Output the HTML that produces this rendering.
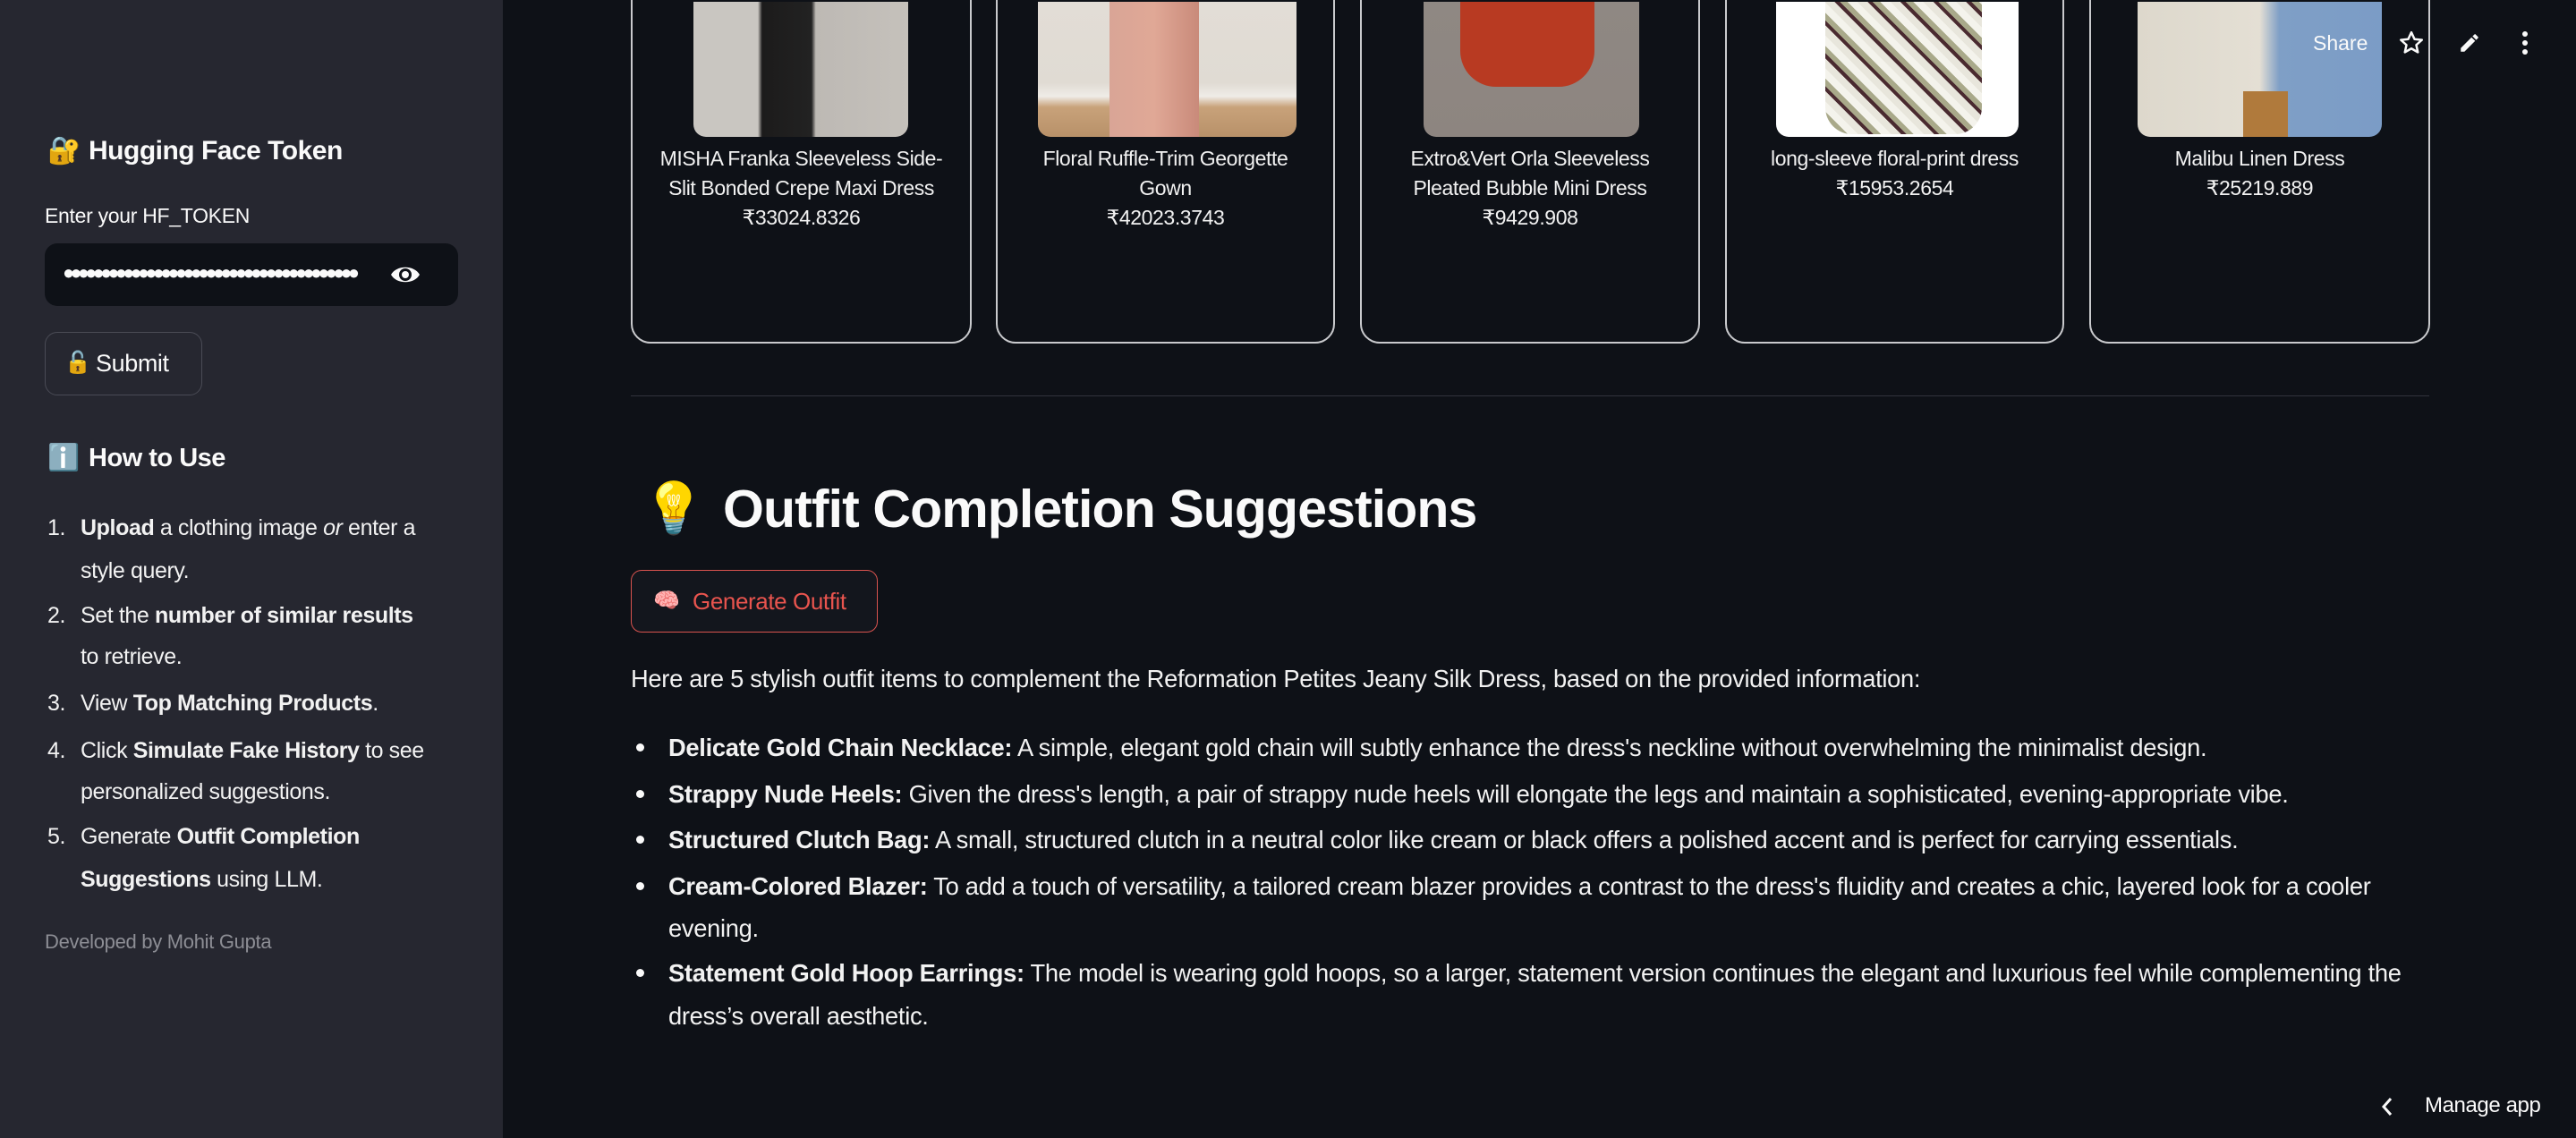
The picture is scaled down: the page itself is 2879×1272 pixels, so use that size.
<!DOCTYPE html>
<html><head><meta charset="utf-8">
<style>
*{margin:0;padding:0;box-sizing:border-box}
body{width:2879px;height:1272px;background:#0e1117;color:#fafafa;font-family:"Liberation Sans","DejaVu Sans",sans-serif;position:relative;overflow:hidden}
.sb{position:absolute;left:0;top:0;width:562px;height:1272px;background:#262730}
.a{position:absolute;white-space:nowrap}
.card{position:absolute;top:-30px;height:414px;border:2px solid #c9cacd;border-radius:22px}
.img{position:absolute;top:0;height:151px;border-radius:0 0 14px 14px}
.ct{position:absolute;left:0;right:0;text-align:center;font-size:23px;line-height:33px;color:#f2f2f2;letter-spacing:-0.4px}
.body{font-size:27.3px;letter-spacing:-0.3px;color:#f2f2f2}
.dot{position:absolute;width:9px;height:9px;border-radius:50%;background:#fafafa}
.sl{font-size:25px;letter-spacing:-0.4px;color:#f2f2f2}
</style></head><body>
<div class="sb"></div>

<!-- sidebar -->
<div class="a" style="left:53px;top:150px;font-size:30px;line-height:38px">🔐</div>
<div class="a" style="left:99px;top:150px;font-size:30px;font-weight:bold;line-height:38px;letter-spacing:-0.5px">Hugging Face Token</div>
<div class="a" style="left:50px;top:227px;font-size:23px;line-height:28px;letter-spacing:-0.3px">Enter your HF_TOKEN</div>
<div style="position:absolute;left:50px;top:272px;width:462px;height:70px;background:#0e1117;border-radius:14px"></div>
<div class="a" style="left:70px;top:290px;font-size:22px;line-height:30px;letter-spacing:-4.9px;font-weight:bold">●●●●●●●●●●●●●●●●●●●●●●●●●●●●●●●●●●●●●●●</div>
<svg style="position:absolute;left:435px;top:293px" width="36" height="28" viewBox="0 0 36 28"><path d="M2 14 C8 3 28 3 34 14 C28 25 8 25 2 14Z" fill="#fafafa"/><circle cx="18" cy="14" r="7" fill="#0e1117"/><circle cx="18" cy="14" r="4" fill="#fafafa"/></svg>
<div style="position:absolute;left:50px;top:371px;width:176px;height:71px;border:1.5px solid #4a4b55;border-radius:14px"></div>
<div class="a" style="left:72px;top:390px;font-size:24px;line-height:32px">🔓</div>
<div class="a" style="left:107px;top:388px;font-size:27px;line-height:36px;letter-spacing:-0.4px">Submit</div>
<div class="a" style="left:53px;top:493px;font-size:29px;line-height:38px">ℹ️</div>
<div class="a" style="left:99px;top:493px;font-size:29px;font-weight:bold;line-height:38px;letter-spacing:-0.5px">How to Use</div>
<div class="a sl" style="left:53px;top:575px;line-height:30px">1.</div>
<div class="a sl" style="left:90px;top:575px;line-height:30px"><b>Upload</b> a clothing image <i>or</i> enter a</div>
<div class="a sl" style="left:90px;top:623px;line-height:30px">style query.</div>
<div class="a sl" style="left:53px;top:673px;line-height:30px">2.</div>
<div class="a sl" style="left:90px;top:673px;line-height:30px">Set the <b>number of similar results</b></div>
<div class="a sl" style="left:90px;top:719px;line-height:30px">to retrieve.</div>
<div class="a sl" style="left:53px;top:771px;line-height:30px">3.</div>
<div class="a sl" style="left:90px;top:771px;line-height:30px">View <b>Top Matching Products</b>.</div>
<div class="a sl" style="left:53px;top:824px;line-height:30px">4.</div>
<div class="a sl" style="left:90px;top:824px;line-height:30px">Click <b>Simulate Fake History</b> to see</div>
<div class="a sl" style="left:90px;top:870px;line-height:30px">personalized suggestions.</div>
<div class="a sl" style="left:53px;top:920px;line-height:30px">5.</div>
<div class="a sl" style="left:90px;top:920px;line-height:30px">Generate <b>Outfit Completion</b></div>
<div class="a sl" style="left:90px;top:968px;line-height:30px"><b>Suggestions</b> using LLM.</div>
<div class="a" style="left:50px;top:1039px;font-size:22px;line-height:28px;color:#8d8e95;letter-spacing:-0.3px">Developed by Mohit Gupta</div>

<!-- cards -->
<div class="card" style="left:705px;width:381px">
 <div class="img" style="top:30px;left:68px;width:240px;background:linear-gradient(90deg,#c9c6c1 0%,#c9c6c1 30%,#1c1b1b 32%,#222 55%,#bdb9b4 57%,#c5c1bb 100%)"></div>
 <div class="ct" style="top:189px">MISHA Franka Sleeveless Side-</div>
 <div class="ct" style="top:222px">Slit Bonded Crepe Maxi Dress</div>
 <div class="ct" style="top:255px">₹33024.8326</div>
</div>
<div class="card" style="left:1113px;width:379px">
 <div class="img" style="top:30px;left:45px;width:289px;background:linear-gradient(180deg,#e2ddd6 0%,#e0dbd3 60%,#efece7 70%,#c8a27a 78%,#b89169 100%)"></div>
 <div class="img" style="top:30px;left:125px;width:100px;background:linear-gradient(90deg,#d9a596,#e0a896,#c98a7a);border-radius:0"></div>
 <div class="ct" style="top:189px">Floral Ruffle-Trim Georgette</div>
 <div class="ct" style="top:222px">Gown</div>
 <div class="ct" style="top:255px">₹42023.3743</div>
</div>
<div class="card" style="left:1520px;width:380px">
 <div class="img" style="top:30px;left:69px;width:241px;background:linear-gradient(180deg,#8f8883 0%,#8d8580 100%)"></div>
 <div class="img" style="top:30px;left:110px;width:150px;height:95px;background:#b83a22;border-radius:0 0 40px 40px"></div>
 <div class="ct" style="top:189px">Extro&amp;Vert Orla Sleeveless</div>
 <div class="ct" style="top:222px">Pleated Bubble Mini Dress</div>
 <div class="ct" style="top:255px">₹9429.908</div>
</div>
<div class="card" style="left:1928px;width:379px">
 <div class="img" style="top:30px;left:55px;width:271px;background:#fff"></div>
 <div class="img" style="top:30px;left:110px;width:175px;height:148px;background:repeating-linear-gradient(45deg,#e8e6dc 0 8px,#4a2a30 8px 12px,#a9a98a 12px 18px,#f4f3ec 18px 26px);border-radius:0 0 30px 30px"></div>
 <div class="ct" style="top:189px">long-sleeve floral-print dress</div>
 <div class="ct" style="top:222px">₹15953.2654</div>
</div>
<div class="card" style="left:2335px;width:381px">
 <div class="img" style="top:30px;left:52px;width:273px;background:linear-gradient(90deg,#ddd8cc 0%,#e4dfd4 50%,#7f9fc6 58%,#7b9cc6 100%)"></div>
 <div class="img" style="top:130px;left:170px;width:50px;height:51px;background:#b07a3c;border-radius:0"></div>
 <div class="ct" style="top:189px">Malibu Linen Dress</div>
 <div class="ct" style="top:222px">₹25219.889</div>
</div>

<!-- toolbar -->
<div class="a" style="left:2585px;top:33px;font-size:23px;line-height:30px">Share</div>
<svg style="position:absolute;left:2680px;top:33px" width="30" height="30" viewBox="0 0 24 24"><path d="M12 2.5l2.8 6.1 6.6.7-5 4.5 1.4 6.5L12 17l-5.8 3.3 1.4-6.5-5-4.5 6.6-.7z" fill="none" stroke="#fafafa" stroke-width="2" stroke-linejoin="round"/></svg>
<svg style="position:absolute;left:2747px;top:35px" width="26" height="26" viewBox="0 0 24 24"><path d="M3 17.25V21h3.75L17.8 9.94l-3.75-3.75L3 17.25zM20.7 7.04a1 1 0 000-1.41l-2.34-2.34a1 1 0 00-1.41 0l-1.830 1.83 3.75 3.75 1.83-1.83z" fill="#fafafa"/></svg>
<svg style="position:absolute;left:2814px;top:33px" width="16" height="30" viewBox="0 0 16 30"><circle cx="8" cy="5" r="3" fill="#fafafa"/><circle cx="8" cy="15" r="3" fill="#fafafa"/><circle cx="8" cy="25" r="3" fill="#fafafa"/></svg>

<!-- divider -->
<div style="position:absolute;left:705px;top:442px;width:2010px;height:1px;background:#31333c"></div>

<div class="a" style="left:718px;top:531px;font-size:56px;line-height:74px">💡</div>
<div class="a" style="left:808px;top:532px;font-size:59px;font-weight:bold;line-height:74px;letter-spacing:-0.9px">Outfit Completion Suggestions</div>

<div style="position:absolute;left:705px;top:637px;width:276px;height:70px;border:1.5px solid #d9534f;border-radius:12px;background:#13161d"></div>
<div class="a" style="left:730px;top:657px;font-size:24px;line-height:30px">🧠</div>
<div class="a" style="left:774px;top:654px;font-size:26px;line-height:36px;color:#e8544e;letter-spacing:-0.4px">Generate Outfit</div>

<div class="a body" style="left:705px;top:743px;line-height:32px">Here are 5 stylish outfit items to complement the Reformation Petites Jeany Silk Dress, based on the provided information:</div>

<div class="dot" style="left:711px;top:831px"></div>
<div class="a body" style="left:747px;top:820px;line-height:32px"><b>Delicate Gold Chain Necklace:</b> A simple, elegant gold chain will subtly enhance the dress's neckline without overwhelming the minimalist design.</div>
<div class="dot" style="left:711px;top:883px"></div>
<div class="a body" style="left:747px;top:872px;line-height:32px"><b>Strappy Nude Heels:</b> Given the dress's length, a pair of strappy nude heels will elongate the legs and maintain a sophisticated, evening-appropriate vibe.</div>
<div class="dot" style="left:711px;top:934px"></div>
<div class="a body" style="left:747px;top:923px;line-height:32px"><b>Structured Clutch Bag:</b> A small, structured clutch in a neutral color like cream or black offers a polished accent and is perfect for carrying essentials.</div>
<div class="dot" style="left:711px;top:986px"></div>
<div class="a body" style="left:747px;top:975px;line-height:32px"><b>Cream-Colored Blazer:</b> To add a touch of versatility, a tailored cream blazer provides a contrast to the dress's fluidity and creates a chic, layered look for a cooler</div>
<div class="a body" style="left:747px;top:1022px;line-height:32px">evening.</div>
<div class="dot" style="left:711px;top:1083px"></div>
<div class="a body" style="left:747px;top:1072px;line-height:32px"><b>Statement Gold Hoop Earrings:</b> The model is wearing gold hoops, so a larger, statement version continues the elegant and luxurious feel while complementing the</div>
<div class="a body" style="left:747px;top:1120px;line-height:32px">dress’s overall aesthetic.</div>

<svg style="position:absolute;left:2660px;top:1225px" width="16" height="24" viewBox="0 0 16 24"><path d="M12 3 L4 12 L12 21" fill="none" stroke="#fafafa" stroke-width="3"/></svg>
<div class="a" style="left:2710px;top:1221px;font-size:24px;line-height:30px;letter-spacing:-0.4px">Manage app</div>
</body></html>
